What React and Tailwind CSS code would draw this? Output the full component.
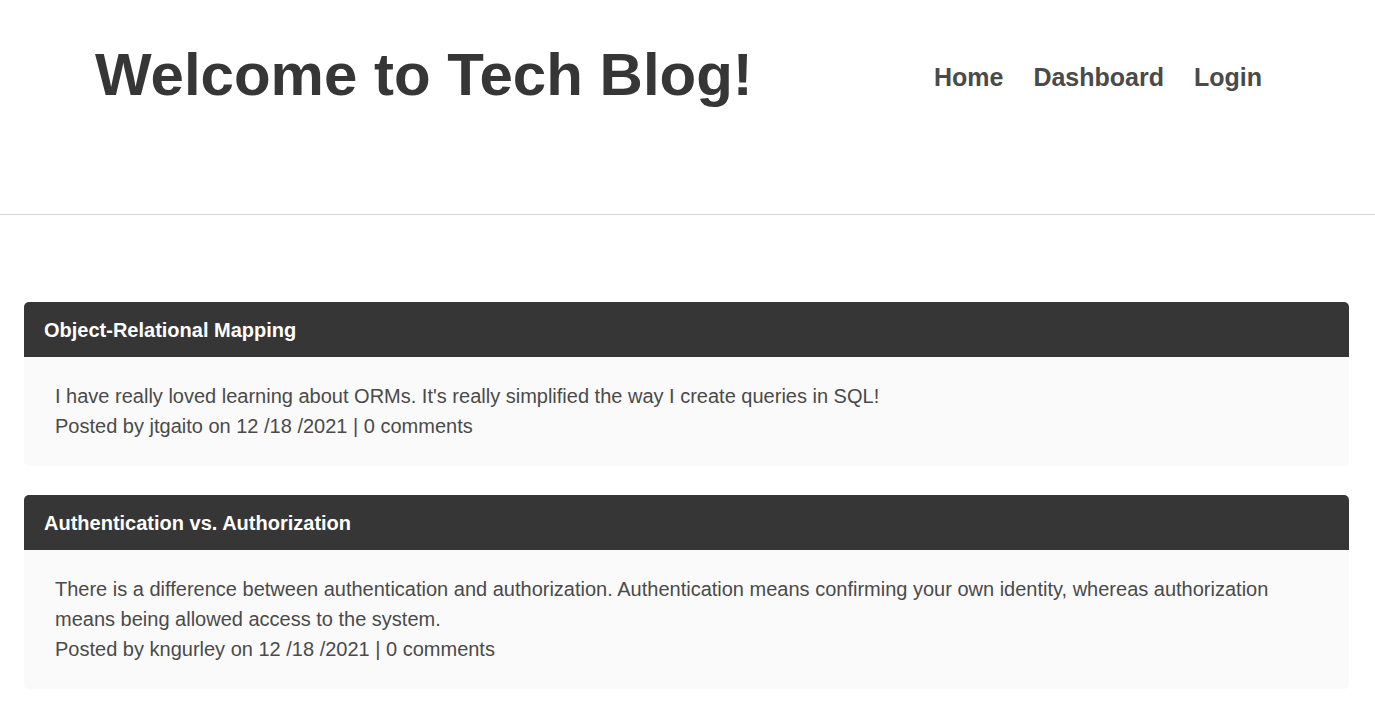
export default function App() {
  const posts = [
    {
      title: "Object-Relational Mapping",
      body: "I have really loved learning about ORMs. It's really simplified the way I create queries in SQL!",
      author: "jtgaito",
    },
    {
      title: "Authentication vs. Authorization",
      body: "There is a difference between authentication and authorization. Authentication means confirming your own identity, whereas authorization means being allowed access to the system.",
      author: "kngurley",
    },
  ];
  return (
    <div className="min-h-[702px] bg-white" style={{ fontFamily: '"Liberation Sans", Arial, sans-serif' }}>
      <header className="h-[215px] border-b border-[#d5d5d5] flex justify-between items-start pl-[95px] pr-[113px] pt-[39px]">
        <h1 className="text-[60px] leading-[72px] font-bold text-[#363636]">Welcome to Tech Blog!</h1>
        <nav className="flex gap-[30px] pt-[24px] text-[25px] leading-[28px] font-bold text-[#4a4a4a]">
          <a>Home</a>
          <a>Dashboard</a>
          <a>Login</a>
        </nav>
      </header>
      <main className="pl-[24px] pr-[26px] pt-[87px] flex flex-col gap-[29px]">
        {posts.map((p) => (
          <section key={p.title} className="rounded-[5px] overflow-hidden">
            <div className="h-[55px] bg-[#363636] flex items-center pl-[20px] text-white text-[20px] font-bold">
              {p.title}
            </div>
            <div className="bg-[#fafafa] pl-[31px] pr-[40px] pt-[24px] pb-[25px] text-[20px] leading-[30px] text-[#4a4a4a]">
              <p>{p.body}</p>
              <p>Posted by {p.author} on 12 /18 /2021 | 0 comments</p>
            </div>
          </section>
        ))}
      </main>
    </div>
  );
}
